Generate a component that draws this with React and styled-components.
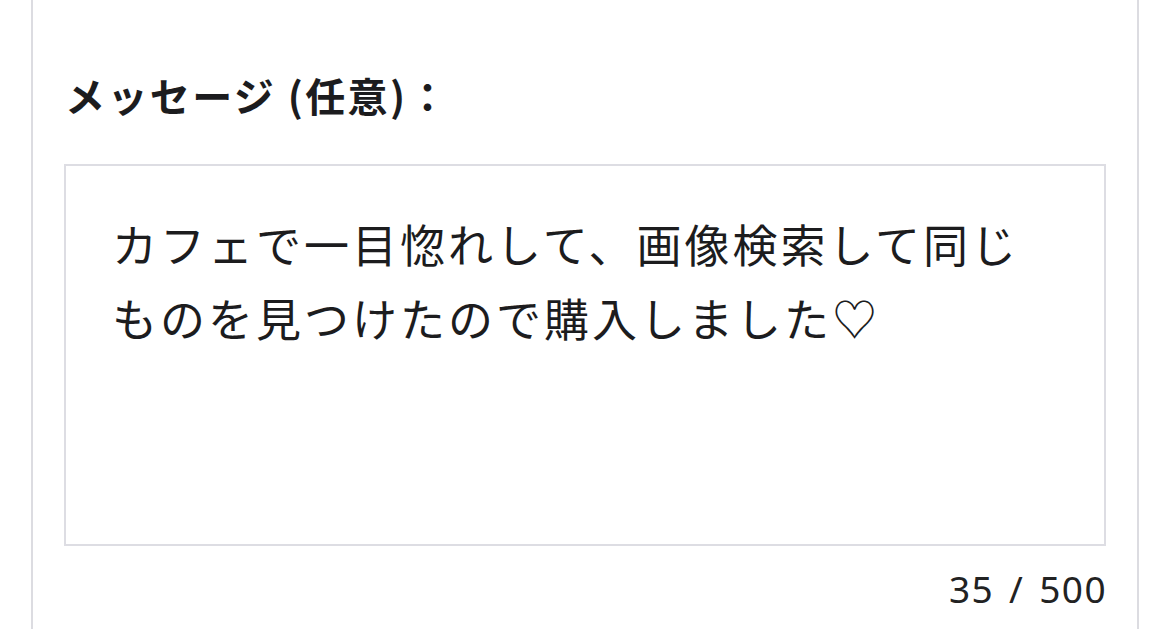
import React from 'react'
import styled, { createGlobalStyle } from 'styled-components'

const GlobalStyle = createGlobalStyle`
  html, body {
    margin: 0;
    padding: 0;
    background: #ffffff;
  }
  body {
    font-family: "Noto Sans CJK JP", "Noto Sans", sans-serif;
    color: #1c1c1e;
  }
`

const Panel = styled.div`
  box-sizing: border-box;
  min-height: 629px;
  margin: 0 31px;
  padding: 65px 31px 0;
  border-left: 2px solid #dcdce1;
  border-right: 2px solid #dcdce1;
  background: #fff;
`

const Label = styled.label`
  display: block;
  font-size: 40px;
  font-weight: 700;
  line-height: 60px;
  letter-spacing: 2.4px;
  color: #1c1c1e;
  margin: 0 0 39px 1px;
`

const MessageBox = styled.textarea`
  display: block;
  box-sizing: border-box;
  width: 100%;
  height: 382px;
  margin: 0;
  padding: 41px 60px 0 46px;
  border: 2px solid #dddde3;
  border-radius: 0;
  outline: none;
  resize: none;
  background: #fff;
  font-family: "Noto Sans CJK JP", "Noto Sans", sans-serif;
  font-size: 45px;
  font-weight: 400;
  line-height: 74px;
  letter-spacing: 3px;
  color: #1c1c1e;
  overflow: hidden;
`

const Counter = styled.div`
  text-align: right;
  font-family: "Noto Sans", sans-serif;
  font-size: 37px;
  line-height: 44px;
  letter-spacing: 1.4px;
  word-spacing: 4px;
  color: #222;
  margin-top: 21px;
  margin-right: -1px;
`

const message = 'カフェで一目惚れして、画像検索して同じものを見つけたので購入しました♡'

export default function App() {
  return (
    <>
      <GlobalStyle />
      <Panel>
        <Label htmlFor="message">メッセージ (任意)：</Label>
        <MessageBox id="message" readOnly defaultValue={message} />
        <Counter>{message.length} / 500</Counter>
      </Panel>
    </>
  )
}
